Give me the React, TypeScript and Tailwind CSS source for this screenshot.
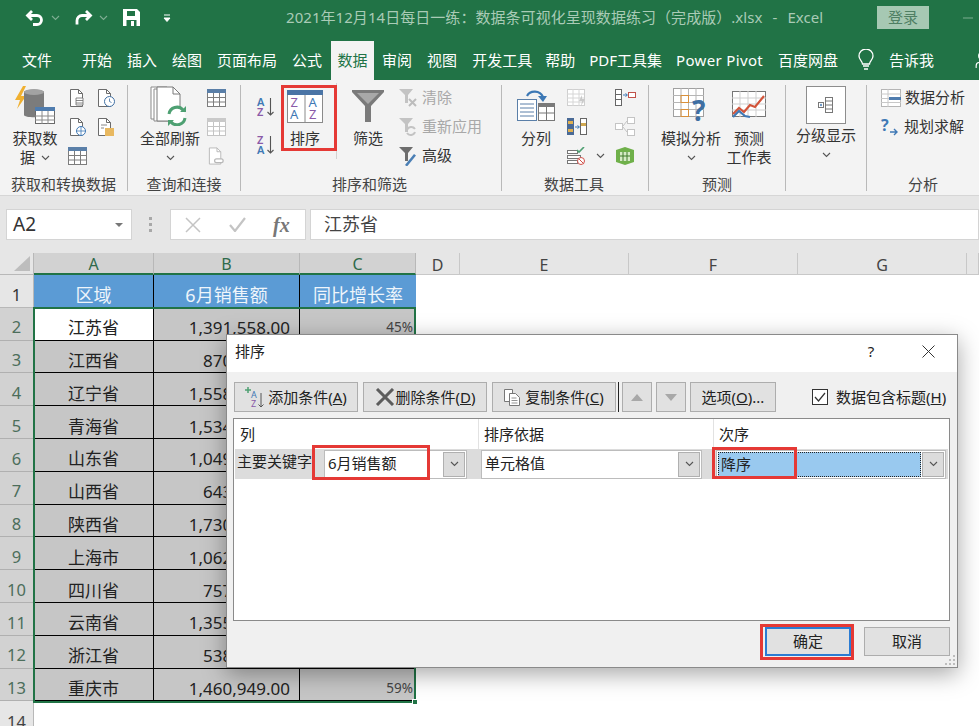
import type { ReactNode } from "react";
import { Minus, User } from "lucide-react";

const tabs = [
  { label: "开始", ml: "ml-[30px]" },
  { label: "插入", ml: "ml-[15px]" },
  { label: "绘图", ml: "ml-[15px]" },
  { label: "页面布局", ml: "ml-[15px]" },
  { label: "公式", ml: "ml-[15px]" },
];
const tabsRight = [
  { label: "审阅", ml: "ml-[8px]" },
  { label: "视图", ml: "ml-[15px]" },
  { label: "开发工具", ml: "ml-[15px]" },
  { label: "帮助", ml: "ml-[13px]" },
  { label: "PDF工具集", ml: "ml-[14px]" },
  { label: "Power Pivot", ml: "ml-[14px] tracking-[0.35px]" },
  { label: "百度网盘", ml: "ml-[15px]" },
];

const rows = [
  { name: "江苏省", sales: "1,391,558.00", rate: "45%" },
  { name: "江西省", sales: "870,432.00", rate: "" },
  { name: "辽宁省", sales: "1,558,120.00", rate: "" },
  { name: "青海省", sales: "1,534,216.00", rate: "" },
  { name: "山东省", sales: "1,049,385.00", rate: "" },
  { name: "山西省", sales: "643,907.00", rate: "" },
  { name: "陕西省", sales: "1,730,264.00", rate: "" },
  { name: "上海市", sales: "1,062,751.00", rate: "" },
  { name: "四川省", sales: "757,318.00", rate: "" },
  { name: "云南省", sales: "1,355,640.00", rate: "" },
  { name: "浙江省", sales: "538,092.00", rate: "" },
  { name: "重庆市", sales: "1,460,949.00", rate: "59%" },
];

function Chevron({ color = "#555" }: { color?: string }) {
  return (
    <svg width="9" height="6" viewBox="0 0 9 6">
      <path d="M1 1l3.5 3.5L8 1" fill="none" stroke={color} strokeWidth="1.1" />
    </svg>
  );
}

function Doc({ children, stroke = "#6b6b6b" }: { children?: ReactNode; stroke?: string }) {
  return (
    <svg width="20" height="20" viewBox="0 0 20 20">
      <path d="M2.5 1.5h8l4 4v13h-12z" fill="#fff" stroke={stroke} />
      <path d="M10.5 1.5v4h4" fill="none" stroke={stroke} />
      {children}
    </svg>
  );
}

function MiniTable({ w = 19, h = 18, muted = false }: { w?: number; h?: number; muted?: boolean }) {
  const line = muted ? "#c4c4c4" : "#7d7d7d";
  return (
    <svg width={w} height={h} viewBox="0 0 19 18">
      <rect x="0.5" y="0.5" width="18" height="17" fill="#fff" stroke={line} />
      <rect x="0" y="0" width="19" height="4" fill={muted ? "#c9c9c9" : "#5a7fa8"} />
      <path d="M0 8.5h19M0 13h19M6.5 4v14M12.5 4v14" stroke={line} fill="none" />
    </svg>
  );
}

function GetDataIcon() {
  return (
    <svg width="42" height="40" viewBox="0 0 42 40">
      <path d="M9 0L1 14h5l-3 9 9-13H7l5-10z" fill="#f0b030" />
      <path d="M10 6c0-3 20-3 20 0v23c0 3-20 3-20 0z" fill="#7c7c7c" />
      <ellipse cx="20" cy="6" rx="10" ry="3" fill="#a3a3a3" />
      <rect x="21.5" y="21.5" width="19" height="16" fill="#fff" stroke="#6a6a6a" />
      <rect x="21" y="21" width="20" height="4" fill="#4f7cae" />
      <path d="M21 30h20M21 34h20M28 25v13M34 25v13" stroke="#8a8a8a" fill="none" />
    </svg>
  );
}

function RefreshIcon() {
  return (
    <svg width="40" height="40" viewBox="0 0 40 40">
      <path d="M1 1h16v32H1z" fill="#fff" stroke="#8a8a8a" />
      <path d="M4 3h16v32H4z" fill="#fff" stroke="#8a8a8a" />
      <path d="M7 1h16l7 7v27H7z" fill="#fff" stroke="#7a7a7a" />
      <path d="M23 1v7h7" fill="none" stroke="#7a7a7a" />
      <circle cx="27" cy="30" r="8" fill="#fff" />
      <path d="M19 28a8 8 0 0 1 14-4M35 32a8 8 0 0 1-14 4" fill="none" stroke="#4ea072" strokeWidth="3" />
      <path d="M30 26h6v-6zM24 34h-6v6z" fill="#4ea072" />
    </svg>
  );
}

function SortLetters({ top, bottom }: { top: string; bottom: string }) {
  const colorOf = (s: string) => (s === "A" ? "#3f79b5" : "#8a5aa8");
  return (
    <svg className="overflow-visible" width="19" height="22" viewBox="0 0 19 22">
      <text x="0" y="10" fontSize="11" fontFamily="Noto Sans" fontWeight="600" fill={colorOf(top)}>{top}</text>
      <text x="0" y="20" fontSize="11" fontFamily="Noto Sans" fontWeight="600" fill={colorOf(bottom)}>{bottom}</text>
      <path d="M13.5 2v17M10.5 16l3 3 3-3" fill="none" stroke="#555" strokeWidth="1.1" />
    </svg>
  );
}

function SortBigIcon() {
  return (
    <svg width="36" height="33" viewBox="0 0 36 33">
      <rect x="0.5" y="0.5" width="35" height="32" fill="#fff" stroke="#8a8a8a" />
      <rect x="0" y="0" width="36" height="5" fill="#4a74a5" />
      <path d="M18 5v28" stroke="#8a8a8a" />
      <text x="3.500" y="17" fontSize="13" fontFamily="Noto Sans" fill="#8a5aa8">Z</text>
      <text x="3" y="29" fontSize="13" fontFamily="Noto Sans" fill="#3f79b5">A</text>
      <text x="21.500" y="17" fontSize="13" fontFamily="Noto Sans" fill="#3f79b5">A</text>
      <text x="22" y="29" fontSize="13" fontFamily="Noto Sans" fill="#8a5aa8">Z</text>
    </svg>
  );
}

function Funnel({ w, h, color }: { w: number; h: number; color: string }) {
  return (
    <svg width={w} height={h} viewBox="0 0 32 32">
      <path d="M0 0h32v2L19 16v16h-6V16L0 2z" fill={color} />
      <path d="M5 3h22L16 14z" fill="#fff" opacity="0.35" />
    </svg>
  );
}

function FilterSmall({ kind }: { kind: "clear" | "reapply" | "advanced" }) {
  const color = kind === "advanced" ? "#6d6d6d" : "#c3c3c3";
  return (
    <svg width="18" height="20" viewBox="0 0 18 20">
      <path d="M0 1h14L9 7v8H6V7z" fill={color} />
      {kind === "clear" && <path d="M10 11l7 7M17 11l-7 7" stroke="#bcbcbc" strokeWidth="2" />}
      {kind === "reapply" && <path d="M8 13a4.5 4.5 0 0 1 8-1M16 15a4.5 4.5 0 0 1-8 1" fill="none" stroke="#c3c3c3" strokeWidth="2" />}
      {kind === "advanced" && <path d="M6 19l9-11 2 1.5-9 11z" fill="#4a7fb5" />}
    </svg>
  );
}

function TextToColumns() {
  return (
    <svg width="38" height="32" viewBox="0 0 38 32">
      <rect x="0.5" y="9.5" width="19" height="21" fill="#fff" stroke="#5a7fa8" />
      <path d="M3 14h14M3 18h14M3 22h14M3 26h14" stroke="#5a7fa8" />
      <rect x="21.5" y="13.5" width="16" height="17" fill="#fff" stroke="#777" />
      <rect x="21" y="13" width="17" height="4" fill="#7a7a7a" />
      <path d="M21 23h17M29.5 17v14" stroke="#777" />
      <path d="M10 6c3-6 13-6 16 1" fill="none" stroke="#3c78b5" strokeWidth="2.2" />
      <path d="M21 6h9l-4 6z" fill="#3c78b5" />
    </svg>
  );
}

function SplitIcon({ kind }: { kind: "flash" | "dup" | "check" | "rel" | "merge" | "model" }) {
  if (kind === "flash") {
    return (
      <svg width="20" height="18" viewBox="0 0 20 18">
        <rect x="0.5" y="0.5" width="17" height="16" fill="#fff" stroke="#cfcfcf" />
        <path d="M0 5h17M0 9h17M0 13h17M6 0v17M12 0v17" stroke="#d6d6d6" />
        <path d="M15 6l-3 6h3l-1 5 4-7h-3z" fill="#c9c9c9" />
      </svg>
    );
  }
  if (kind === "dup") {
    return (
      <svg width="21" height="18" viewBox="0 0 21 18">
        <rect x="0" y="0" width="7" height="17" fill="#4a6a96" />
        <rect x="1" y="3" width="5" height="3" fill="#e0b050" />
        <rect x="1" y="11" width="5" height="3" fill="#e0b050" />
        <rect x="13.5" y="0.5" width="6" height="16" fill="#fff" stroke="#666" />
        <rect x="14" y="5" width="5" height="3" fill="#d0a850" />
        <path d="M8 9h4M10.5 7.5l2 1.5-2 1.500" fill="none" stroke="#3c78b5" />
      </svg>
    );
  }
  if (kind === "check") {
    return (
      <svg width="19" height="18" viewBox="0 0 19 18">
        <rect x="0.5" y="3.5" width="10" height="3" fill="#fff" stroke="#777" />
        <rect x="0.5" y="8.5" width="13" height="3" fill="#fff" stroke="#777" />
        <rect x="0.5" y="13.5" width="10" height="3" fill="#fff" stroke="#777" />
        <path d="M10 3l2 2 5-5" fill="none" stroke="#4ea072" strokeWidth="1.6" />
        <circle cx="14" cy="14" r="3.5" fill="#fff" stroke="#d0504a" />
        <path d="M11.5 11.5l5 5" stroke="#d0504a" />
      </svg>
    );
  }
  if (kind === "rel") {
    return (
      <svg width="20" height="19" viewBox="0 0 20 19">
        <rect x="0.5" y="6.5" width="7" height="6" fill="#fff" stroke="#c4c4c4" />
        <rect x="12.5" y="0.5" width="7" height="6" fill="#fff" stroke="#c4c4c4" />
        <rect x="12.5" y="12.5" width="7" height="6" fill="#fff" stroke="#c4c4c4" />
        <path d="M8 9l4-5M8 10l4 5" stroke="#c4c4c4" fill="none" />
      </svg>
    );
  }
  if (kind === "merge") {
    return (
      <svg width="21" height="17" viewBox="0 0 21 17">
        <rect x="0.5" y="0.5" width="6" height="16" fill="#fff" stroke="#666" />
        <path d="M0 5.5h6M0 10.5h6" stroke="#666" />
        <rect x="13.5" y="3.5" width="7" height="5" fill="#fff" stroke="#c0524a" />
        <path d="M8 6h4M10.5 4.5l2 1.500-2 1.500" fill="none" stroke="#3c78b5" />
      </svg>
    );
  }
  return (
    <svg width="20" height="20" viewBox="0 0 20 20">
      <path d="M1 4l9-3 9 3v12l-9 3-9-3z" fill="#6fb04a" />
      <path d="M5 6h10v9H5z" fill="#d5ebc5" />
      <path d="M8 6v9M12 6v9M5 10h10" stroke="#3f7a2a" />
    </svg>
  );
}

function WhatIfIcon() {
  return (
    <svg className="overflow-visible" width="36" height="36" viewBox="0 0 36 36">
      <rect x="0.5" y="0.5" width="30" height="28" fill="#fff" stroke="#a0a0a0" />
      <path d="M0 7.5h31M0 14.5h31M0 21.5h31M8 0v29M15.5 0v29M23 0v29" stroke="#b5b5b5" />
      <rect x="8" y="7.5" width="7.5" height="7" fill="none" stroke="#d9903a" />
      <rect x="8" y="21.5" width="7.5" height="7" fill="none" stroke="#d9903a" />
      <text x="19" y="33" fontSize="28" fontWeight="700" fontFamily="Noto Sans" fill="#3f6fa3">?</text>
    </svg>
  );
}

function ForecastIcon() {
  return (
    <svg width="35" height="31" viewBox="0 0 35 31">
      <rect x="0.5" y="0.5" width="33" height="25" fill="#fff" stroke="#777" />
      <path d="M0 7h34M0 13h34M0 19h34M8 0v26M16 0v26M24 0v26" stroke="#cfcfcf" />
      <path d="M1 23l6-6 5 4 6-7 5 2 9-11" fill="none" stroke="#d2543a" strokeWidth="2.2" />
      <path d="M1 26l6-6 6 5 5 1" fill="none" stroke="#3f78b5" strokeWidth="2.2" />
    </svg>
  );
}

function AnalysisIcon() {
  return (
    <svg width="20" height="18" viewBox="0 0 20 18">
      <rect x="0.5" y="0.5" width="19" height="17" fill="#fff" stroke="#b5b5b5" />
      <path d="M0 5h20M0 9.5h20M0 13.5h20M7 0v18" stroke="#c8c8c8" />
      <rect x="8" y="8" width="12" height="3" fill="#4f7cae" />
    </svg>
  );
}

function SolverIcon() {
  return (
    <svg className="overflow-visible" width="18" height="18" viewBox="0 0 18 18">
      <text x="0" y="13" fontSize="16" fontWeight="700" fontFamily="Noto Sans" fill="#3f78b5">?</text>
      <path d="M9 14h7M13 11l3 3-3 3" fill="none" stroke="#3f78b5" strokeWidth="1.4" />
    </svg>
  );
}

function LargeButton({
  icon,
  lines,
  chevron,
  tail,
  className,
  iconH = "h-[46px]",
}: {
  icon: ReactNode;
  lines: string[];
  chevron?: boolean;
  tail?: string;
  className: string;
  iconH?: string;
}) {
  return (
    <div className={`flex flex-col items-center shrink-0 ${className}`}>
      <div className={`flex items-center justify-center ${iconH}`}>{icon}</div>
      {lines.map((line) => (
        <div key={line} className="h-[19px] leading-[19px] whitespace-nowrap">{line}</div>
      ))}
      {chevron && <div className="h-[19px] flex items-center"><Chevron /></div>}
      {tail && (
        <div className="h-[19px] flex items-center gap-[6px]">
          {tail}
          <Chevron />
        </div>
      )}
    </div>
  );
}

function Slot({ children, className = "" }: { children?: ReactNode; className?: string }) {
  return <div className={`h-[29px] flex items-center ${className}`}>{children}</div>;
}

function Group({ label, width, labelClass = "", children }: { label: string; width: string; labelClass?: string; children: ReactNode }) {
  return (
    <div className={`shrink-0 h-[111px] flex flex-col ${width}`}>
      <div className="h-[91px] flex items-start">{children}</div>
      <div className={`h-[20px] leading-[20px] text-center text-[#444] ${labelClass}`}>{label}</div>
    </div>
  );
}

function Divider() {
  return <div className="w-px h-[106px] mt-[2px] bg-[#b9b9b9] shrink-0" />;
}

function ToolButton({ children, className }: { children: ReactNode; className: string }) {
  return (
    <div className={`h-[30px] shrink-0 bg-[#e1e1e1] border border-[#adadad] flex items-center justify-center whitespace-nowrap ${className}`}>
      {children}
    </div>
  );
}

function Combo({ text, className }: { text: string; className: string }) {
  return (
    <div className={`h-[29px] shrink-0 bg-white border border-[#bcbcbc] flex items-center ${className}`}>
      <div className="flex-1 pl-[3px] pb-[1px]">{text}</div>
      <div className="w-[22px] h-[25px] mr-[1px] bg-[#dcdcdc] border border-[#b0b0b0] flex items-center justify-center">
        <Chevron />
      </div>
    </div>
  );
}

export default function App() {
  return (
    <div className="relative w-[979px] h-[726px] overflow-hidden bg-white font-['Noto_Sans','Noto_Sans_CJK_SC',sans-serif] text-[15px] text-[#333]">
      {/* title bar */}
      <div className="h-[40px] bg-[#217346] flex items-center pb-[5px]">
        <svg className="ml-[25px]" width="20" height="18" viewBox="0 0 20 18">
          <path d="M7 2L2.500 6.500 7 11M3 6.500h9a4.500 4.500 0 0 1 0 9H8" fill="none" stroke="#fff" strokeWidth="2.800" />
        </svg>
        <div className="ml-[6px]"><Chevron color="#7fae93" /></div>
        <svg className="ml-[13px]" width="20" height="18" viewBox="0 0 20 18">
          <path d="M13 2l4.500 4.500L13 11M17 6.500H9a5 5 0 0 0-5 5v4" fill="none" stroke="#fff" strokeWidth="2.800" />
        </svg>
        <div className="ml-[6px]"><Chevron color="#7fae93" /></div>
        <svg className="ml-[15px]" width="17" height="17" viewBox="0 0 17 17">
          <path d="M0 0h14l3 3v14H0z" fill="#fff" />
          <rect x="4" y="2" width="8" height="5" fill="#217346" />
          <rect x="3.500" y="11" width="10" height="6" fill="#217346" />
          <rect x="8" y="12" width="3" height="5" fill="#fff" />
        </svg>
        <svg className="ml-[23px]" width="8" height="8" viewBox="0 0 8 8">
          <path d="M1 1h6M1 4h6L4 7.500z" stroke="#fff" fill="#fff" strokeWidth="1" />
        </svg>
        <div className="ml-[115px] text-[#a9cbb6] whitespace-nowrap w-[550px] tracking-[0.05px]">
          2021年12月14日每日一练：数据条可视化呈现数据练习（完成版）.xlsx<span className="mx-[10px]">-</span>Excel
        </div>
        <div className="ml-[41px] w-[52px] h-[23px] bg-[#a6c8b3] text-[#4f7f63] flex items-center justify-center">登录</div>
        <Minus className="ml-[31px] text-[#a9cbb6]" size={16} strokeWidth={1} />
      </div>

      {/* tabs */}
      <div className="h-[40px] bg-[#217346] flex items-center text-white whitespace-nowrap overflow-hidden *:shrink-0">
        <div className="ml-[22px]">文件</div>
        {tabs.map((tab) => (
          <div key={tab.label} className={tab.ml}>{tab.label}</div>
        ))}
        <div className="ml-[9px] w-[43px] h-[39px] mt-[1px] bg-[#f3f3f3] text-[#217346] flex items-center justify-center">数据</div>
        {tabsRight.map((tab) => (
          <div key={tab.label} className={tab.ml}>{tab.label}</div>
        ))}
        <svg className="ml-[20px]" width="16" height="22" viewBox="0 0 16 22">
          <path d="M4.500 15c0-3-3.500-4-3.500-8a7 7 0 0 1 14 0c0 4-3.500 5-3.500 8z" fill="none" stroke="#fff" strokeWidth="1.300" />
          <path d="M5 17h6M6 20h4" stroke="#fff" strokeWidth="1.500" />
        </svg>
        <div className="ml-[15px]">告诉我</div>
        <User className="ml-[38px]" size={20} strokeWidth={1.4} />
      </div>

      {/* ribbon */}
      <div className="h-[116px] bg-[#f3f3f3] pt-[3px] flex items-start border-b border-[#d6d6d6]">
        <Group label="获取和转换数据" width="w-[127px]">
          <LargeButton
            className="w-[60px] ml-[5px]"
            icon={<GetDataIcon />}
            lines={["获取数"]}
            tail="据"
          />
          <div className="w-[28px] ml-[3px] flex flex-col">
            <Slot><Doc><path d="M8 10h7v7H8zM8 12.500h7M8 15h7" fill="#fff" stroke="#6b6b6b" strokeWidth="0.800" /></Doc></Slot>
            <Slot><Doc><circle cx="13" cy="14" r="4.500" fill="#fff" stroke="#3f78b5" /><path d="M8.500 14h9M13 9.500v9" stroke="#3f78b5" strokeWidth="0.800" /></Doc></Slot>
            <Slot><MiniTable /></Slot>
          </div>
          <div className="w-[28px] flex flex-col">
            <Slot><Doc><circle cx="13.500" cy="13.500" r="5" fill="#fff" stroke="#3f6fa3" /><path d="M13.500 10.500v3l2 1" fill="none" stroke="#3f6fa3" strokeWidth="0.800" /></Doc></Slot>
            <Slot><Doc><rect x="9" y="11" width="9" height="8" fill="#e8b860" /><path d="M5 8h6M5 11h3" stroke="#6b6b6b" strokeWidth="0.800" /></Doc></Slot>
          </div>
        </Group>
        <Divider />
        <Group label="查询和连接" width="w-[112px]">
          <LargeButton
            className="w-[66px] ml-[9px]"
            icon={<RefreshIcon />}
            lines={["全部刷新"]}
            chevron
          />
          <div className="w-[19px] ml-[4px] flex flex-col">
            <Slot><MiniTable /></Slot>
            <Slot><MiniTable muted /></Slot>
            <Slot><Doc stroke="#b8b8b8"><path d="M8 15a2 2 0 0 1 2-2h5a2 2 0 0 1 0 4h-5a2 2 0 0 1-2-2z" fill="#fff" stroke="#b8b8b8" strokeWidth="1.300" /></Doc></Slot>
          </div>
        </Group>
        <Divider />
        <Group label="排序和筛选" width="w-[260px]" labelClass="pr-[3px]">
          <div className="w-[19px] ml-[16px] pt-[13px] flex flex-col gap-[16px] shrink-0">
            <SortLetters top="A" bottom="Z" />
            <SortLetters top="Z" bottom="A" />
          </div>
          <LargeButton className="w-[48px] ml-[5px]" icon={<SortBigIcon />} lines={["排序"]} />
          <div className="w-px h-[76px] ml-[7px] bg-[#d2d2d2] shrink-0" />
          <LargeButton className="w-[44px] ml-[9px]" icon={<Funnel w={32} h={32} color="#7a7a7a" />} lines={["筛选"]} />
          <div className="ml-[9px] flex flex-col whitespace-nowrap">
            <Slot className="gap-[5px] text-[#a8a8a8]"><FilterSmall kind="clear" />清除</Slot>
            <Slot className="gap-[5px] text-[#a8a8a8]"><FilterSmall kind="reapply" />重新应用</Slot>
            <Slot className="gap-[5px]"><FilterSmall kind="advanced" />高级</Slot>
          </div>
        </Group>
        <Divider />
        <Group label="数据工具" width="w-[146px]" labelClass="pr-[2px]">
          <LargeButton className="w-[44px] ml-[12px]" icon={<TextToColumns />} lines={["分列"]} />
          <div className="w-[48px] ml-[9px] flex flex-col shrink-0">
            <Slot><SplitIcon kind="flash" /></Slot>
            <Slot><SplitIcon kind="dup" /></Slot>
            <Slot className="gap-[10px]"><SplitIcon kind="check" /><Chevron /></Slot>
          </div>
          <div className="w-[21px] flex flex-col shrink-0">
            <Slot><SplitIcon kind="merge" /></Slot>
            <Slot><SplitIcon kind="rel" /></Slot>
            <Slot><SplitIcon kind="model" /></Slot>
          </div>
        </Group>
        <Divider />
        <Group label="预测" width="w-[136px]">
          <LargeButton className="w-[64px] ml-[10px]" icon={<WhatIfIcon />} lines={["模拟分析"]} chevron />
          <LargeButton className="w-[46px] ml-[3px]" icon={<ForecastIcon />} lines={["预测", "工作表"]} />
        </Group>
        <Divider />
        <Group label="" width="w-[80px]">
          <LargeButton
            className="w-[80px]"
            iconH="h-[43px]"
            icon={
              <div className="w-[40px] h-[38px] bg-white border border-[#8d8d8d] flex items-center justify-center">
                <svg width="16" height="16" viewBox="0 0 16 16">
                  <rect x="7.500" y="0.500" width="7" height="15" fill="#fff" stroke="#777" />
                  <path d="M7.500 4h7M7.500 8h7M7.500 12h7" stroke="#777" />
                  <rect x="0.500" y="5.500" width="5" height="5" fill="#fff" stroke="#777" />
                  <path d="M2 8h2M3 6.800v2.400" stroke="#3f78b5" />
                </svg>
              </div>
            }
            lines={["分级显示"]}
            chevron
          />
        </Group>
        <Divider />
        <Group label="分析" width="w-[112px]">
          <div className="ml-[14px] flex flex-col whitespace-nowrap">
            <Slot className="gap-[4px]"><AnalysisIcon />数据分析</Slot>
            <Slot className="gap-[5px]"><SolverIcon />规划求解</Slot>
          </div>
        </Group>
      </div>

      {/* formula bar */}
      <div className="h-[57px] bg-[#e6e6e6] flex items-start pt-[13px]">
        <div className="ml-[6px] w-[126px] h-[31px] bg-white border border-[#d4d4d4] flex items-center pl-[6px] text-[19px]">
          <div className="flex-1">A2</div>
          <svg className="mr-[8px]" width="8" height="4" viewBox="0 0 8 4"><path d="M0 0h8L4 4z" fill="#777" /></svg>
        </div>
        <div className="ml-[17px] mt-[8px] flex flex-col gap-[3px]">
          <div className="w-[3px] h-[3px] bg-[#a8a8a8]" />
          <div className="w-[3px] h-[3px] bg-[#a8a8a8]" />
          <div className="w-[3px] h-[3px] bg-[#a8a8a8]" />
        </div>
        <div className="ml-[18px] w-[136px] h-[31px] bg-white border border-[#d4d4d4] flex items-center">
          <svg className="ml-[14px]" width="16" height="16" viewBox="0 0 16 16"><path d="M1 1l14 14M15 1L1 15" stroke="#c4c4c4" strokeWidth="1.500" /></svg>
          <svg className="ml-[28px]" width="17" height="15" viewBox="0 0 17 15"><path d="M1 8l5 6L16 1" fill="none" stroke="#c4c4c4" strokeWidth="2.200" /></svg>
          <div className="ml-[27px] font-['Liberation_Serif',serif] italic font-bold text-[20px] text-[#777]">fx</div>
        </div>
        <div className="ml-[4px] flex-1 h-[31px] bg-white border border-[#d4d4d4] flex items-center pl-[13px] text-[#444] text-[18px]">江苏省</div>
      </div>

      {/* sheet */}
      <div className="grid grid-cols-[34px_120px_146px_116px_44px_169px_169px_169px_1fr] text-[16px] leading-none">
        <div className="h-[22px] bg-[#e6e6e6] border-r border-b border-[#b8b8b8] flex items-end justify-end pb-[3px] pr-[3px]">
          <svg width="16" height="15" viewBox="0 0 16 15"><path d="M16 0v15H0z" fill="#bdbdbd" /></svg>
        </div>
        {["A", "B", "C"].map((col) => (
          <div key={col} className="h-[22px] pt-[2px] bg-[#d2d2d2] border-r border-[#b8b8b8] border-b-2 border-b-[#217346] text-[#2f6a4b] flex items-center justify-center">{col}</div>
        ))}
        {["D", "E", "F", "G", ""].map((col) => (
          <div key={col} className="h-[22px] pt-[2px] bg-[#e6e6e6] border-r border-b border-[#c8c8c8] text-[#444] flex items-center justify-center">{col}</div>
        ))}

        <div className="h-[32.800px] pt-[8px] bg-[#e6e6e6] border-r border-b border-[#b8b8b8] flex items-center justify-center text-[#333] text-[16.500px]">1</div>
        {["区域", "6月销售额", "同比增长率"].map((head, i) => (
          <div key={head} className={`h-[32.800px] pt-[8px] bg-[#5b9bd5] text-[#eef5fb] text-[18px] flex items-center justify-center ${i < 2 ? "border-r border-black" : ""}`}>{head}</div>
        ))}
        <div className="col-span-5" />

        {rows.map((row, i) => (
          <div key={row.name} className="contents">
            <div className="h-[32.800px] pt-[8px] bg-[#d2d2d2] border-r border-b border-[#b0b0b0] flex items-center justify-center text-[#4c6e5b] text-[16.500px]">{i + 2}</div>
            <div className={`h-[32.800px] pt-[8px] border-r border-b border-black flex items-center justify-center text-[17px] text-[#222] ${i === 0 ? "bg-white" : "bg-[#c6c6c6]"}`}>{row.name}</div>
            <div className="h-[32.800px] pt-[8px] bg-[#c6c6c6] border-r border-b border-black flex items-center justify-end pr-[9px] text-[17px] text-[#222]">{row.sales}</div>
            <div className="h-[32.800px] pt-[8px] bg-[#c6c6c6] border-b border-black flex items-center justify-end pr-[3px] text-[13.500px] text-[#444]">{row.rate}</div>
            <div className="col-span-5" />
          </div>
        ))}

        <div className="h-[33px] pt-[8px] bg-[#e6e6e6] border-r border-[#b8b8b8] flex items-center justify-center text-[#444] text-[16.500px]">14</div>
      </div>

      {/* selection outline */}
      <div className="absolute left-[33px] top-[307px] w-[383px] h-[396px] border-2 border-[#217346] pointer-events-none" />
      <div className="absolute left-[412px] top-[699px] w-[6px] h-[6px] bg-[#217346] border border-white" />

      {/* red callouts on the ribbon */}
      <div className="absolute left-[281px] top-[85px] w-[56px] h-[66px] border-[3px] border-[#e53935]" />

      {/* dialog */}
      <div className="absolute left-[226px] top-[334px] w-[732px] h-[334px] bg-[#f0f0f0] border border-[#8a8a8a] shadow-[0_6px_22px_rgba(0,0,0,0.35)] flex flex-col text-[15px] text-[#222]">
        <div className="h-[37px] pb-[4px] bg-white flex items-center pl-[8px] shrink-0">
          <div className="flex-1">排序</div>
          <div className="text-[15px] w-[16px] text-center">?</div>
          <svg className="ml-[43px] mr-[22px]" width="13" height="13" viewBox="0 0 13 13">
            <path d="M0.500 0.500l12 12M12.500 0.500l-12 12" stroke="#333" />
          </svg>
        </div>
        <div className="flex pl-[7px] pt-[10px] shrink-0">
          <ToolButton className="w-[124px] gap-[3px]">
            <svg className="overflow-visible" width="20" height="21" viewBox="0 0 20 21">
              <path d="M3 0v6M0 3h6" stroke="#4ea072" strokeWidth="1.500" />
              <text x="6" y="11" fontSize="9" fontFamily="Noto Sans" fill="#3f79b5">A</text>
              <text x="6" y="20" fontSize="9" fontFamily="Noto Sans" fill="#8a5aa8">Z</text>
              <path d="M16 6v14M13.500 17.500l2.500 2.500 2.500-2.500" fill="none" stroke="#555" />
            </svg>
            <span>添加条件(<u>A</u>)</span>
          </ToolButton>
          <ToolButton className="w-[124px] ml-[5px] gap-[1px]">
            <svg width="20" height="18" viewBox="0 0 20 18"><path d="M2 1l16 16M18 1L2 17" stroke="#5c5c5c" strokeWidth="3" /></svg>
            <span>删除条件(<u>D</u>)</span>
          </ToolButton>
          <ToolButton className="w-[124px] ml-[5px] gap-[4px]">
            <svg width="17" height="17" viewBox="0 0 17 17">
              <path d="M0.500 0.500h8v12h-8z" fill="#fff" stroke="#777" />
              <path d="M5.500 4.500h6l4 4v8h-10z" fill="#fff" stroke="#777" />
              <path d="M7.500 9h5M7.500 11.500h6M7.500 14h6" stroke="#777" strokeWidth="0.800" />
            </svg>
            <span>复制条件(<u>C</u>)</span>
          </ToolButton>
          <div className="w-px h-[30px] bg-[#222] ml-[2px] shrink-0" />
          <ToolButton className="w-[30px] ml-[3px]">
            <svg width="12" height="7" viewBox="0 0 12 7"><path d="M6 0l6 7H0z" fill="#a8a8a8" /></svg>
          </ToolButton>
          <ToolButton className="w-[30px] ml-[4px]">
            <svg width="12" height="7" viewBox="0 0 12 7"><path d="M0 0h12L6 7z" fill="#a8a8a8" /></svg>
          </ToolButton>
          <ToolButton className="w-[86px] ml-[4px]">
            <span>选项(<u>O</u>)...</span>
          </ToolButton>
          <div className="ml-[36px] h-[30px] flex items-center gap-[8px] whitespace-nowrap">
            <div className="w-[16px] h-[16px] bg-white border border-[#333] flex items-center justify-center shrink-0">
              <svg width="12" height="10" viewBox="0 0 12 10"><path d="M1 5l3.500 4L11 1" fill="none" stroke="#333" strokeWidth="1.200" /></svg>
            </div>
            <span>数据包含标题(<u>H</u>)</span>
          </div>
        </div>

        <div className="mt-[6px] ml-[6px] w-[717px] h-[203px] bg-white border border-[#8a8a8a] shrink-0">
          <div className="h-[30px] flex items-center">
            <div className="w-[245px] h-full pl-[6px] flex items-center border-r border-[#e2e2e2]">列</div>
            <div className="w-[235px] h-full pl-[5px] flex items-center border-r border-[#e2e2e2]">排序依据</div>
            <div className="pl-[5px]">次序</div>
          </div>
          <div className="h-[30px] mx-[1px] bg-[#dcdcdc] flex items-center">
            <div className="ml-[2px] w-[87px] whitespace-nowrap pb-[5px]">主要关键字</div>
            <Combo className="w-[143px]" text="6月销售额" />
            <Combo className="w-[221px] ml-[14px]" text="单元格值" />
            <div className="w-[230px] ml-[14px] h-[29px] bg-white border border-[#bcbcbc] flex items-center">
              <div className="flex-1 h-[25px] ml-[1px] bg-[#99c9ef] border border-dotted border-[#222] flex items-center pl-[2px]">降序</div>
              <div className="w-[22px] h-[25px] mx-[1px] bg-[#dcdcdc] border border-[#b0b0b0] flex items-center justify-center">
                <Chevron />
              </div>
            </div>
          </div>
        </div>

        <div className="flex justify-end pt-[6px] pr-[7px] gap-[13px]">
          <div className="w-[86px] h-[29px] bg-[#e1e1e1] border-2 border-[#2b7cd3] flex items-center justify-center">确定</div>
          <div className="w-[86px] h-[29px] bg-[#e1e1e1] border border-[#adadad] flex items-center justify-center">取消</div>
        </div>

        {/* red callouts */}
        <div className="absolute left-[85px] top-[110px] w-[118px] h-[35px] border-[3px] border-[#e53935]" />
        <div className="absolute left-[485px] top-[112px] w-[85px] h-[32px] border-[3px] border-[#e53935]" />
        <div className="absolute left-[533px] top-[289px] w-[94px] h-[36px] border-[3px] border-[#e53935]" />

        <svg className="absolute right-[1px] bottom-[1px]" width="12" height="12" viewBox="0 0 12 12">
          <path d="M9 1h2v2H9zM5 5h2v2H5zM9 5h2v2H9zM1 9h2v2H1zM5 9h2v2H5zM9 9h2v2H9z" fill="#bdbdbd" />
        </svg>
      </div>
    </div>
  );
}
